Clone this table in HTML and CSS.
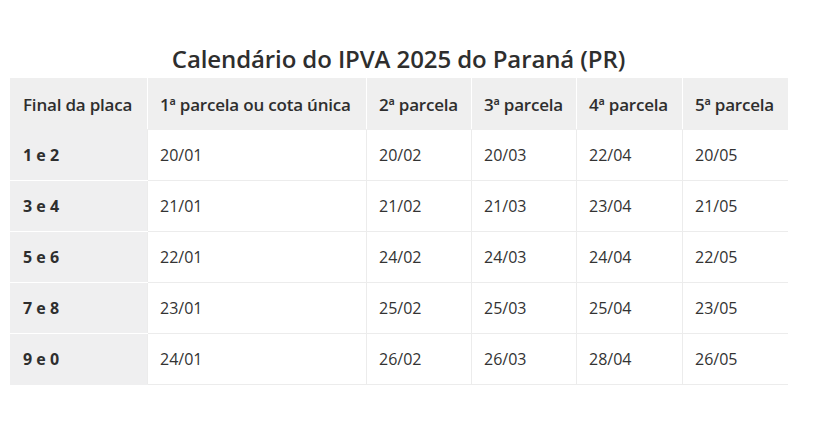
FILE: index.html
```html
<!DOCTYPE html>
<html lang="pt-BR">
<head>
<meta charset="utf-8">
<title>Calendário do IPVA 2025 do Paraná (PR)</title>
<link rel="stylesheet" href="styles.css">
</head>
<body>
<div class="wrap">
  <h2 class="title">Calendário do IPVA 2025 do Paraná (PR)</h2>
  <table class="cal">
    <colgroup>
      <col class="c0"><col class="c1"><col class="c2"><col class="c3"><col class="c4"><col class="c5">
    </colgroup>
    <thead>
      <tr>
        <th>Final da placa</th>
        <th>1ª parcela ou cota única</th>
        <th>2ª parcela</th>
        <th>3ª parcela</th>
        <th>4ª parcela</th>
        <th>5ª parcela</th>
      </tr>
    </thead>
    <tbody>
      <tr><th>1 e 2</th><td>20/01</td><td>20/02</td><td>20/03</td><td>22/04</td><td>20/05</td></tr>
      <tr><th>3 e 4</th><td>21/01</td><td>21/02</td><td>21/03</td><td>23/04</td><td>21/05</td></tr>
      <tr><th>5 e 6</th><td>22/01</td><td>24/02</td><td>24/03</td><td>24/04</td><td>22/05</td></tr>
      <tr><th>7 e 8</th><td>23/01</td><td>25/02</td><td>25/03</td><td>25/04</td><td>23/05</td></tr>
      <tr><th>9 e 0</th><td>24/01</td><td>26/02</td><td>26/03</td><td>28/04</td><td>26/05</td></tr>
    </tbody>
  </table>
</div>
</body>
</html>
```
FILE: styles.css
```css
html, body {
  margin: 0;
  padding: 0;
  background: #ffffff;
}
body {
  font-family: "Open Sans", "Noto Sans", "Liberation Sans", sans-serif;
  color: #333333;
}
.wrap {
  width: 777px;
  padding: 42px 0 0 10px;
}
.title {
  margin: 0 0 3px 0;
  text-align: center;
  font-size: 24px;
  line-height: 33px;
  font-weight: 600;
  color: #2e2e2e;
  letter-spacing: -0.1px;
}
.cal {
  width: 777px;
  border-collapse: collapse;
  table-layout: fixed;
  font-size: 16px;
}
.c0 { width: 137px; }
.c1 { width: 219px; }
.c2 { width: 105px; }
.c3 { width: 105px; }
.c4 { width: 106px; }
.c5 { width: 105px; }
.cal th, .cal td {
  height: 51px;
  padding: 0 12px;
  text-align: left;
  vertical-align: middle;
  border: 1px solid #ececec;
  box-sizing: border-box;
}
.cal td {
  font-weight: 400;
  color: #333333;
}
.cal thead th {
  background: #efefef;
  font-size: 17px;
  font-weight: 600;
  color: #2e2e2e;
  letter-spacing: -0.2px;
  border-color: #ffffff;
  border-top-color: #efefef;
  border-bottom-color: #efefef;
}
.cal thead th:first-child { border-left-color: #efefef; }
.cal thead th:last-child { border-right-color: #efefef; }
.cal tbody th {
  background: #efeff0;
  font-size: 16px;
  font-weight: 700;
  color: #2e2e2e;
  border-color: #ffffff;
  border-left-color: #efeff0;
  border-right-color: #ececec;
}
.cal tbody tr:last-child th { border-bottom-color: #efeff0; }
.cal tbody td:last-child { border-right-color: #ffffff; }
.cal tbody tr:last-child td { border-bottom-color: #ececec; }
```
